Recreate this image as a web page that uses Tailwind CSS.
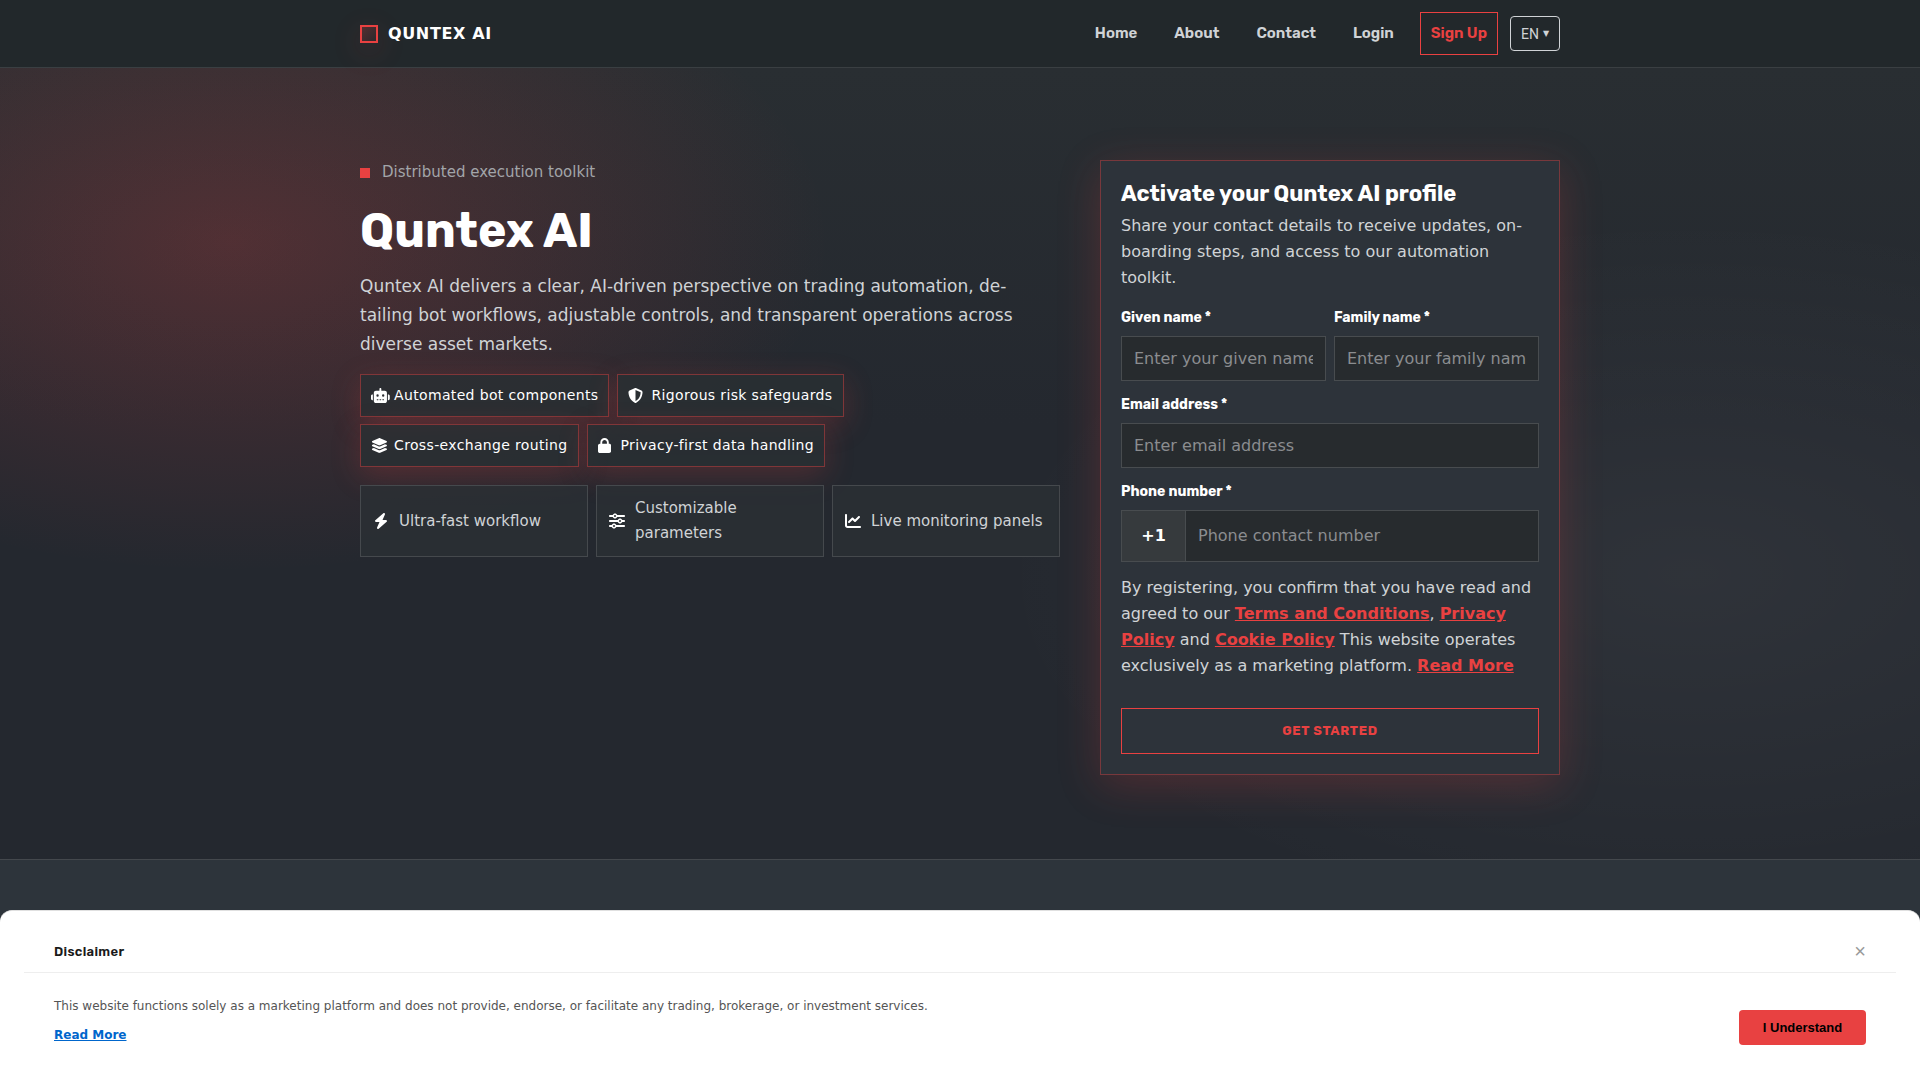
<!DOCTYPE html>
<html lang="en">
<head>
  <meta charset="UTF-8" />
  <title>Quntex AI</title>
  <meta name="viewport" content="width=device-width, initial-scale=1" />
  <script src="https://cdn.jsdelivr.net/npm/@tailwindcss/browser@4"></script>
</head>
<body class="min-h-screen bg-[#2d343b] font-['DejaVu_Sans',sans-serif] text-base text-[#d0d3d6]">

  <!-- Header -->
  <header class="relative border-b border-[#3a3f42] bg-[#22282b] px-6">
    <div class="mx-auto flex max-w-[1200px] items-center justify-between py-3">
      <a href="#" class="flex items-center gap-[10px] font-bold tracking-[0.04em] text-white">
        <span class="h-[18px] w-[18px] border-2 border-[#e94141] bg-linear-to-br from-[#e94141]/25 to-[#e94141]/5 shadow-[0_8px_30px_rgba(233,65,65,0.2)]"></span>
        QUNTEX AI
      </a>
      <div class="flex items-center gap-3">
        <nav class="flex items-center gap-[15px] font-['Rubik','Inter',sans-serif] text-[15px] leading-[25px] font-semibold">
          <a href="#" class="border border-transparent px-[10px] py-2">Home</a>
          <a href="#" class="border border-transparent px-[10px] py-2">About</a>
          <a href="#" class="border border-transparent px-[10px] py-2">Contact</a>
          <a href="#" class="border border-transparent px-[10px] py-2">Login</a>
          <a href="#" class="border border-[#e94141] px-[10px] py-2 text-[#e94141]">Sign Up</a>
        </nav>
        <button type="button" class="flex h-[35px] w-[50px] items-center justify-center gap-1 rounded border border-[#d0d3d6] font-['Roboto',sans-serif] text-sm">EN <span class="font-['DejaVu_Sans'] text-[8px]">▼</span></button>
      </div>
    </div>
  </header>

  <!-- Hero -->
  <section class="border-b border-[#44484d] bg-[#24272f] bg-[radial-gradient(600px_330px_at_12%_22%,rgba(233,65,65,0.22),transparent),radial-gradient(700px_360px_at_88%_64%,rgba(255,255,255,0.05),transparent),linear-gradient(180deg,#292e32,#24282f_45%)] px-6 pt-[92px] pb-[84px]">
    <div class="mx-auto grid max-w-[1200px] grid-cols-[1fr_460px] gap-10">
      <div>
        <div class="flex items-center gap-3 text-[15px] leading-[25px] text-[#a2a5a9]">
          <span class="h-[10px] w-[10px] bg-[#e94141]"></span>
          Distributed execution toolkit
        </div>
        <h1 class="mt-[17px] font-['Rubik','Inter',sans-serif] text-5xl leading-[58px] font-bold text-white">Quntex AI</h1>
        <p class="mt-3 max-w-[680px] text-[17px] leading-[29px]">Quntex AI delivers a clear, AI-driven perspective on trading automation, de&shy;tailing bot workflows, adjustable controls, and transparent operations across diverse asset markets.</p>

        <!-- Chips -->
        <ul class="mt-[15px] flex flex-wrap gap-x-2 gap-y-[7px] text-sm leading-[23px] tracking-wide text-white">
          <li class="flex items-center gap-2 border border-[#e94141]/45 bg-[#293033]/80 px-[10px] py-[9px] shadow-[0_8px_30px_rgba(233,65,65,0.22)]">
            <span class="w-[15px]"><svg class="h-[15px] max-w-none fill-current" viewBox="0 0 640 512"><path d="M320 0c17.7 0 32 14.3 32 32V96H472c39.8 0 72 32.2 72 72V440c0 39.8-32.2 72-72 72H168c-39.8 0-72-32.2-72-72V168c0-39.8 32.2-72 72-72H288V32c0-17.7 14.3-32 32-32zM208 384c-8.8 0-16 7.2-16 16s7.2 16 16 16h32c8.8 0 16-7.2 16-16s-7.2-16-16-16H208zm96 0c-8.8 0-16 7.2-16 16s7.2 16 16 16h32c8.8 0 16-7.2 16-16s-7.2-16-16-16H304zm96 0c-8.8 0-16 7.2-16 16s7.2 16 16 16h32c8.8 0 16-7.2 16-16s-7.2-16-16-16H400zM264 256a40 40 0 1 0 -80 0 40 40 0 1 0 80 0zm152 40a40 40 0 1 0 0-80 40 40 0 1 0 0 80zM48 224H64V416H48c-26.5 0-48-21.5-48-48V272c0-26.5 21.5-48 48-48zm544 0c26.5 0 48 21.5 48 48v96c0 26.5-21.5 48-48 48H576V224h16z"/></svg></span>
            Automated bot components
          </li>
          <li class="flex items-center gap-2 border border-[#e94141]/45 bg-[#293033]/80 px-[10px] py-[9px] shadow-[0_8px_30px_rgba(233,65,65,0.22)]">
            <svg class="h-[15px] w-[15px] fill-current" viewBox="0 0 512 512"><path d="M256 0c4.6 0 9.2 1 13.4 2.9L457.7 82.8c22 9.3 38.4 31 38.3 57.2c-.5 99.2-41.3 280.7-213.6 363.2c-16.7 8-36.1 8-52.8 0C57.3 420.7 16.5 239.2 16 140c-.1-26.2 16.3-47.9 38.3-57.2L242.7 2.9C246.8 1 251.4 0 256 0zm0 66.8V444.8C394 378 431.1 230.1 432 141.4L256 66.8l0 0z"/></svg>
            Rigorous risk safeguards
          </li>
          <li class="flex items-center gap-2 border border-[#e94141]/45 bg-[#293033]/80 px-[10px] py-[9px] shadow-[0_8px_30px_rgba(233,65,65,0.22)]">
            <span class="w-[15px]"><svg class="h-[15px] max-w-none fill-current" viewBox="0 0 576 512"><path d="M264.5 5.2c14.9-6.9 32.1-6.9 47 0l218.6 101c8.5 3.9 13.9 12.4 13.9 21.8s-5.4 17.9-13.9 21.8l-218.6 101c-14.9 6.9-32.1 6.9-47 0L45.9 149.8C37.4 145.8 32 137.3 32 128s5.4-17.9 13.9-21.8L264.5 5.2zM476.9 209.6l53.2 24.6c8.5 3.9 13.9 12.4 13.9 21.8s-5.4 17.9-13.9 21.8l-218.6 101c-14.9 6.9-32.1 6.9-47 0L45.9 277.8C37.4 273.8 32 265.3 32 256s5.4-17.9 13.9-21.8l53.2-24.6 152 70.2c23.4 10.8 50.4 10.8 73.8 0l152-70.2zm-152 198.2l152-70.2 53.2 24.6c8.5 3.9 13.9 12.4 13.9 21.8s-5.4 17.9-13.9 21.8l-218.6 101c-14.9 6.9-32.1 6.9-47 0L45.9 405.8C37.4 401.8 32 393.3 32 384s5.4-17.9 13.9-21.8l53.2-24.6 152 70.2c23.4 10.8 50.4 10.8 73.8 0z"/></svg></span>
            Cross-exchange routing
          </li>
          <li class="flex items-center gap-2 border border-[#e94141]/45 bg-[#293033]/80 px-[10px] py-[9px] shadow-[0_8px_30px_rgba(233,65,65,0.22)]">
            <span class="w-[15px]"><svg class="h-[15px] max-w-none fill-current" viewBox="0 0 448 512"><path d="M144 144v48H304V144c0-44.2-35.8-80-80-80s-80 35.8-80 80zM80 192V144C80 64.5 144.5 0 224 0s144 64.5 144 144v48h16c35.3 0 64 28.7 64 64V448c0 35.3-28.7 64-64 64H64c-35.3 0-64-28.7-64-64V256c0-35.3 28.7-64 64-64H80z"/></svg></span>
            Privacy-first data handling
          </li>
        </ul>

        <!-- Features -->
        <ul class="mt-[18px] grid grid-cols-3 gap-2 text-[15px] leading-[25px]">
          <li class="flex items-center gap-[10px] border border-[#45494d] bg-[#2a2f35]/80 px-3 py-[10px]">
            <svg class="h-4 w-4 shrink-0 fill-white" viewBox="0 0 448 512"><path d="M349.4 44.6c5.9-13.7 1.5-29.7-10.6-38.5s-28.6-8-39.9 1.8l-256 224c-10 8.8-13.6 22.9-8.9 35.3S50.7 288 64 288H175.5L98.6 467.4c-5.9 13.7-1.5 29.7 10.6 38.5s28.6 8 39.9-1.8l256-224c10-8.8 13.6-22.9 8.9-35.3s-16.6-20.7-30-20.7H272.5L349.4 44.6z"/></svg>
            <span>Ultra-fast workflow</span>
          </li>
          <li class="flex items-center gap-[10px] border border-[#45494d] bg-[#2a2f35]/80 px-3 py-[10px]">
            <svg class="h-4 w-4 shrink-0 fill-white" viewBox="0 0 512 512"><path d="M0 416c0 17.7 14.3 32 32 32l54.7 0c12.3 28.3 40.5 48 73.3 48s61-19.7 73.3-48L480 448c17.7 0 32-14.3 32-32s-14.3-32-32-32l-246.7 0c-12.3-28.3-40.5-48-73.3-48s-61 19.7-73.3 48L32 384c-17.7 0-32 14.3-32 32zm128 0a32 32 0 1 1 64 0 32 32 0 1 1 -64 0zM320 256a32 32 0 1 1 64 0 32 32 0 1 1 -64 0zm32-80c-32.8 0-61 19.7-73.3 48L32 224c-17.7 0-32 14.3-32 32s14.3 32 32 32l246.7 0c12.3 28.3 40.5 48 73.3 48s61-19.7 73.3-48l54.7 0c17.7 0 32-14.3 32-32s-14.3-32-32-32l-54.7 0c-12.3-28.3-40.5-48-73.3-48zM192 128a32 32 0 1 1 0-64 32 32 0 1 1 0 64zm73.3-64C253 35.7 224.8 16 192 16s-61 19.7-73.3 48L32 64C14.3 64 0 78.3 0 96s14.3 32 32 32l86.7 0c12.3 28.3 40.5 48 73.3 48s61-19.7 73.3-48L480 128c17.7 0 32-14.3 32-32s-14.3-32-32-32L265.3 64z"/></svg>
            <span>Customizable parameters</span>
          </li>
          <li class="flex items-center gap-[10px] border border-[#45494d] bg-[#2a2f35]/80 px-3 py-[10px]">
            <svg class="h-4 w-4 shrink-0 fill-white" viewBox="0 0 512 512"><path d="M64 64c0-17.7-14.3-32-32-32S0 46.3 0 64V400c0 44.2 35.8 80 80 80H480c17.7 0 32-14.3 32-32s-14.3-32-32-32H80c-8.8 0-16-7.2-16-16V64zm406.6 86.6c12.5-12.5 12.5-32.8 0-45.3s-32.8-12.5-45.3 0L320 210.7l-57.4-57.4c-12.5-12.5-32.8-12.5-45.3 0l-112 112c-12.5 12.5-12.5 32.8 0 45.3s32.8 12.5 45.3 0L240 221.3l57.4 57.4c12.5 12.5 32.8 12.5 45.3 0l128-128z"/></svg>
            <span>Live monitoring panels</span>
          </li>
        </ul>
      </div>

      <!-- Sign up form -->
      <form class="border border-[#e94141]/40 bg-[#2d333a] p-5 shadow-[0_10px_40px_rgba(233,65,65,0.22)]">
        <h2 class="font-['Rubik','Inter',sans-serif] text-[22px] leading-[26px] font-bold text-white">Activate your Quntex AI profile</h2>
        <p class="mt-[6px] leading-[26px]">Share your contact details to receive updates, on&shy;boarding steps, and access to our automation toolkit.</p>

        <div class="mt-[15px] grid grid-cols-2 gap-2">
          <div>
            <label for="given" class="block font-['Rubik','Inter',sans-serif] text-sm leading-6 font-bold text-white">Given name *</label>
            <input id="given" type="text" placeholder="Enter your given name" class="mt-[6px] h-[45px] w-full border border-[#484c4f] bg-[#272b2e] px-3 placeholder:text-[#8b8d90]" />
          </div>
          <div>
            <label for="family" class="block font-['Rubik','Inter',sans-serif] text-sm leading-6 font-bold text-white">Family name *</label>
            <input id="family" type="text" placeholder="Enter your family name" class="mt-[6px] h-[45px] w-full border border-[#484c4f] bg-[#272b2e] px-3 placeholder:text-[#8b8d90]" />
          </div>
        </div>

        <label for="email" class="mt-3 block font-['Rubik','Inter',sans-serif] text-sm leading-6 font-bold text-white">Email address *</label>
        <input id="email" type="email" placeholder="Enter email address" class="mt-[6px] h-[45px] w-full border border-[#484c4f] bg-[#272b2e] px-3 placeholder:text-[#8b8d90]" />

        <label for="phone" class="mt-3 block font-['Rubik','Inter',sans-serif] text-sm leading-6 font-bold text-white">Phone number *</label>
        <div class="mt-[6px] flex h-[52px] border border-[#484c4f] bg-[#272b2e]">
          <span class="flex w-16 items-center justify-center border-r border-[#484c4f] bg-[#363a3d] font-bold text-white">+1</span>
          <input id="phone" type="tel" placeholder="Phone contact number" class="min-w-0 flex-1 px-3 placeholder:text-[#8b8d90]" />
        </div>

        <p class="mt-[13px] leading-[26px]">By registering, you confirm that you have read and agreed to our <a href="#" class="font-bold text-[#e94141] underline">Terms and Conditions</a>, <a href="#" class="font-bold text-[#e94141] underline">Privacy Policy</a> and <a href="#" class="font-bold text-[#e94141] underline">Cookie Policy</a> This website operates exclusively as a marketing platform. <a href="#" class="font-bold text-[#e94141] underline">Read More</a></p>

        <button type="submit" class="mt-[29px] h-[46px] w-full border border-[#e94141] font-['Rubik','Inter',sans-serif] text-[13px] font-bold tracking-wider text-[#e94141]">GET STARTED</button>
      </form>
    </div>
  </section>

  <!-- Disclaimer bar -->
  <div role="dialog" aria-labelledby="disclaimer-title" class="fixed inset-x-0 bottom-0 rounded-t-xl border-t border-[#e0e0e0] bg-white px-6 pt-5 pb-[35px]">
    <div class="flex items-center justify-between border-b border-[#eeeeee] px-[30px] py-2">
      <h3 id="disclaimer-title" class="font-['Rubik','Inter',sans-serif] text-[13px] leading-[25px] font-semibold tracking-wide text-[#1a1a1a]">Disclaimer</h3>
      <button type="button" aria-label="Close" class="font-['Liberation_Sans',sans-serif] text-xl leading-[25px] text-[#999999]">×</button>
    </div>
    <div class="flex items-end justify-between px-[30px] pt-6">
      <div class="text-xs leading-[19px] text-[#555555]">
        <p>This website functions solely as a marketing platform and does not provide, endorse, or facilitate any trading, brokerage, or investment services.</p>
        <a href="#" class="mt-[10px] block w-fit font-bold text-[#0066cc] underline">Read More</a>
      </div>
      <button type="button" class="h-[35px] w-[127px] rounded bg-[#e84141] font-['Liberation_Sans',sans-serif] text-[13px] font-bold text-black">I Understand</button>
    </div>
  </div>
</body>
</html>
